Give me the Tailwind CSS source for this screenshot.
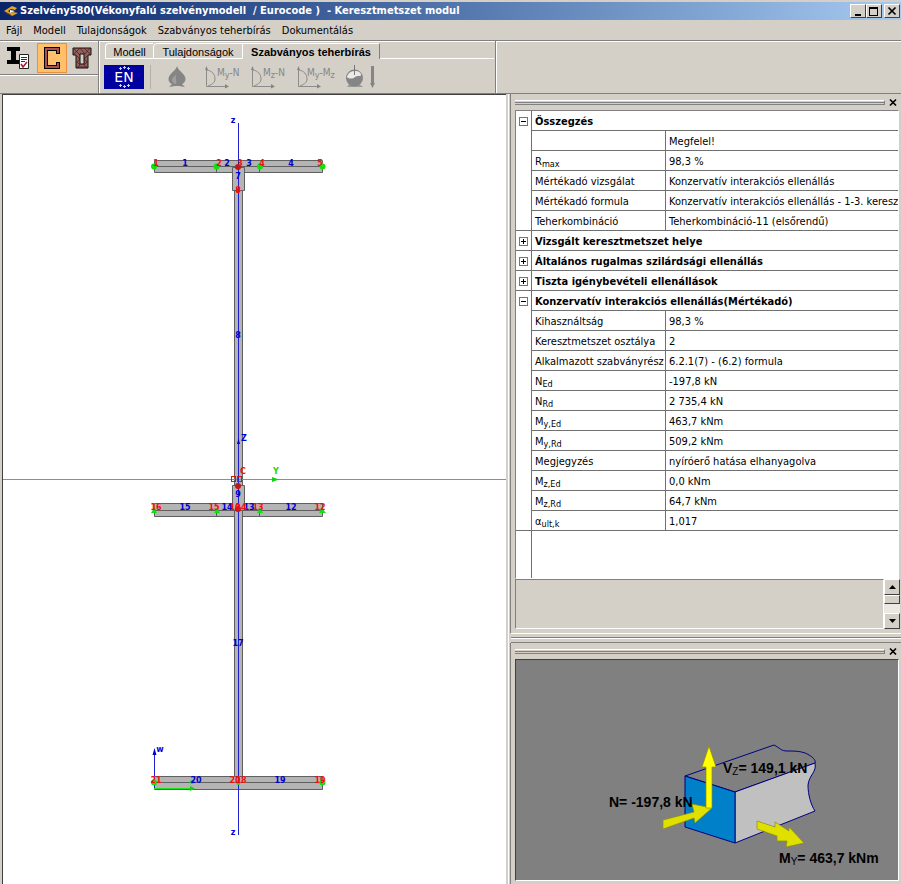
<!DOCTYPE html>
<html lang="hu">
<head>
    <meta charset="UTF-8">
    <meta name="viewport" content="width=device-width, initial-scale=1.0">
    <title>Keresztmetszet modul</title>
    <script src="https://cdn.jsdelivr.net/npm/@tailwindcss/browser@4"></script>
</head>
<body class="flex h-screen flex-col overflow-hidden bg-[#d4d0c8] font-['DejaVu_Sans_Condensed','DejaVu_Sans',sans-serif] text-[11px] leading-4 text-black">
    <!-- Címsor -->
    <header class="mt-0.5 flex h-[18px] shrink-0 items-center gap-0.5 bg-linear-to-r from-[#0a246a] to-[#a6caf0] pr-px pl-1">
        <svg class="h-3 w-3.5 shrink-0" viewBox="0 0 14 12">
            <path d="M0 6 L8 1 L13 3 L11 5 L7 4 L4 6 L7 8 L9 7 L14 8 L8 11Z" fill="#e8a420" />
            <path d="M6 5 L11 6 L6 8Z" fill="#fff" />
            <path d="M0 6 L3 9 L8 11 L6 9Z" fill="#6b3a10" />
        </svg>
        <h1 class="flex-1 truncate font-bold whitespace-pre text-white">Szelvény580(Vékonyfalú szelvénymodell  / Eurocode )  - Keresztmetszet modul</h1>
        <div class="flex gap-0.5">
            <div class="flex">
                <button aria-label="Kis méret" class="flex h-3.5 w-4 items-center justify-center border border-white border-r-[#404040] border-b-[#404040] bg-[#d4d0c8]"><svg class="h-2.5 w-2.5" viewBox="0 0 10 10"><path d="M2 8h6v2H2z" /></svg></button>
                <button aria-label="Teljes méret" class="flex h-3.5 w-4 items-center justify-center border border-white border-r-[#404040] border-b-[#404040] bg-[#d4d0c8]"><svg class="h-2.5 w-2.5" viewBox="0 0 10 10"><path d="M0 1h9v9H0zM1 3v6h7V3z" fill-rule="evenodd" /></svg></button>
            </div>
            <button aria-label="Bezárás" class="flex h-3.5 w-4 items-center justify-center border border-white border-r-[#404040] border-b-[#404040] bg-[#d4d0c8]"><svg class="h-2.5 w-2.5" viewBox="0 0 10 10"><path d="M1.500 1.500l7 7M8.500 1.500l-7 7" stroke="#000" stroke-width="1.700" /></svg></button>
        </div>
    </header>

    <!-- Menü -->
    <nav class="flex h-5 shrink-0 items-center gap-[11px] px-1.5 pt-px">
        <button>Fájl</button>
        <button>Modell</button>
        <button>Tulajdonságok</button>
        <button>Szabványos teherbírás</button>
        <button>Dokumentálás</button>
    </nav>

    <!-- Eszköztár -->
    <div class="flex h-[54px] shrink-0 border-y border-[#808080] shadow-[inset_0_1px_0_#fff]">
        <div class="w-[99px] border-r border-[#808080]">
            <div class="flex h-[34px] items-center gap-1 border-b border-[#808080] px-1 pt-px shadow-[0_1px_0_#fff]">
                <button aria-label="Szelvény" class="flex h-[30px] w-[29px] items-center justify-center">
                    <svg class="h-6 w-6" viewBox="0 0 24 24">
                        <path d="M0 1h13v4H9v9h4v4H0v-4h4V5H0z" />
                        <path d="M12.500 8.500h9v14h-9z" fill="#fff" stroke="#222" />
                        <path d="M14 11.500h6M14 13.500h6M14 15.500h4" stroke="#333" />
                        <path d="M14 18l2 3 4-5" fill="none" stroke="#b01030" stroke-width="1.500" />
                    </svg>
                </button>
                <button aria-label="Vékonyfalú modell" class="flex h-[30px] w-[30px] items-center justify-center border border-[#e89040] bg-[#ffc06c]">
                    <svg class="h-6 w-5" viewBox="0 0 20 24">
                        <path d="M16 8V3H4v18h12v-5" fill="none" stroke="#000" stroke-width="4" />
                        <path d="M16 7V3H4v18h12v-4" fill="none" stroke="#a85050" stroke-width="2" />
                        <path d="M5.500 5v14" stroke="#300" />
                    </svg>
                </button>
                <button aria-label="Felületmodell" class="flex h-[30px] w-[22px] items-center justify-center">
                    <svg class="h-6 w-5" viewBox="0 0 20 24">
                        <path d="M1 2h18v7h-3v13H4V9H1z" fill="#935f5b" stroke="#111" />
                        <path d="M2 8l6-6 5 6 5-6M5 10l3 3-3 3 3 3-3 3M15 10l-3 3 3 3-3 3 3 3M5 21h10M2 3l6 6M18 8l-6-6" fill="none" stroke="#501818" stroke-width="0.700" />
                        <path d="M8 8h4v10H8z" fill="#d4d0c8" stroke="#111" />
                    </svg>
                </button>
            </div>
        </div>
        <div class="w-[397px] border-r border-[#808080] pt-0.5 pl-0.5 shadow-[1px_0_0_#fff,inset_1px_0_0_#fff]">
            <div role="tablist" class="flex h-4 w-[393px] font-['Liberation_Sans',sans-serif]">
                <button role="tab" class="ml-1 w-12 rounded-tl border border-r-0 border-white">Modell</button>
                <button role="tab" class="w-[90px] rounded-tl border border-white">Tulajdonságok</button>
                <button role="tab" aria-selected="true" class="w-[137px] border-t border-r border-white border-r-[#808080] font-bold">Szabványos teherbírás</button>
                <div class="flex-1 border-b border-white"></div>
            </div>
            <div class="flex h-9 items-center pl-[3px]">
                <button aria-label="EN szabvány" class="h-6 w-10 bg-[#0000a0]">
                    <svg class="h-6 w-10" viewBox="0 0 40 24">
                        <path d="M15 3.500h3M19 2.500h3M23 3.500h3M16.500 2v3M20.500 1v3M24.500 2v3M15 20.500h3M19 21.500h3M23 20.500h3M16.500 19v3M20.500 20v3M24.500 19v3" stroke="#c8d0ff" />
                        <text x="20" y="17" text-anchor="middle" class="fill-white font-['DejaVu_Sans',sans-serif] text-[14px]">EN</text>
                    </svg>
                </button>
                <div class="ml-1.5 flex items-center gap-2 border-l border-[#b4b0a8] pl-4">
                    <button aria-label="Tűz" class="mr-2.5 h-6 w-5">
                        <svg class="h-6 w-5" viewBox="0 0 20 24">
                            <path d="M10 1c1 4 4 5 7 9 3 4 1 8-2 9l3 3-6-1H8l-6 1 3-3c-3-1-5-5-2-9 3-4 6-5 7-9z" fill="#858585" />
                            <path d="M9 8c0 3-4 4-4 7 0 2 2 4 4 4 1-3-1-7 0-11z" fill="#a29f9a" />
                        </svg>
                    </button>
                    <button aria-label="My-N" class="h-6 w-[38px]">
                        <svg class="h-6 w-[38px]" viewBox="0 0 38 24">
                            <path d="M1.500 2v19.500H23M2 5c5 1 8 4 8 9 0 3-2 5-7 7" fill="none" stroke="#8c8c88" />
                            <path d="M0 5l1.500-4L3 5zM20 19l4 2.500-4 2z" fill="#858585" />
                            <text x="12" y="11" class="fill-[#858585] font-['DejaVu_Sans_Condensed',sans-serif] text-[10px]">M<tspan font-size="9" dy="2">y</tspan><tspan dy="-2">-N</tspan></text>
                        </svg>
                    </button>
                    <button aria-label="Mz-N" class="h-6 w-[38px]">
                        <svg class="h-6 w-[38px]" viewBox="0 0 38 24">
                            <path d="M1.500 2v19.500H23M2 5c5 1 8 4 8 9 0 3-2 5-7 7" fill="none" stroke="#8c8c88" />
                            <path d="M0 5l1.500-4L3 5zM20 19l4 2.500-4 2z" fill="#858585" />
                            <text x="12" y="11" class="fill-[#858585] font-['DejaVu_Sans_Condensed',sans-serif] text-[10px]">M<tspan font-size="9" dy="2">z</tspan><tspan dy="-2">-N</tspan></text>
                        </svg>
                    </button>
                    <button aria-label="My-Mz" class="h-6 w-10">
                        <svg class="h-6 w-10" viewBox="0 0 40 24">
                            <path d="M1.500 2v19.500H23M2 5c5 1 8 4 8 9 0 3-2 5-7 7" fill="none" stroke="#8c8c88" />
                            <path d="M0 5l1.500-4L3 5zM20 19l4 2.500-4 2z" fill="#858585" />
                            <text x="10" y="11" class="fill-[#858585] font-['DejaVu_Sans_Condensed',sans-serif] text-[10px]">M<tspan font-size="9" dy="2">y</tspan><tspan dy="-2">-M</tspan><tspan font-size="9" dy="2">z</tspan></text>
                        </svg>
                    </button>
                    <button aria-label="Vizsgálat" class="h-6 w-8">
                        <svg class="h-6 w-8" viewBox="0 0 32 24">
                            <path d="M2 22l3-4h8l5 4z" fill="#999" />
                            <circle cx="9.500" cy="13" r="8.500" fill="#858585" />
                            <path d="M2 12c1-4 4-6 8-6s6 2 6 4-4 0-6 2-6 2-8 0z" fill="#eceae6" />
                            <path d="M9.500 0v10" stroke="#777" />
                            <path d="M26 1h3v17h1l-2.500 5-2.500-5h1z" fill="#858585" />
                        </svg>
                    </button>
                </div>
            </div>
        </div>
    </div>

    <main class="flex min-h-0 flex-1">
        <!-- Keresztmetszet rajza -->
        <section class="mr-0.5 ml-0.5 min-w-0 flex-1 border-t border-l border-[#404040] bg-white">
            <svg class="block h-full w-full font-['DejaVu_Sans',sans-serif] text-[8px] font-bold" viewBox="3 95 503 789">
                <!-- övlemezek és gerinc -->
                <g fill="#b4b4b4" stroke="#606060">
                    <path d="M154.500 160.500h168v12h-168zM154.500 503.500h168v13h-168zM154.500 776.500h168v13h-168z" />
                    <path d="M234.500 190.500h8v586h-8z" />
                    <path d="M232.500 167.500h12v23h-12zM232.500 485.500h12v25h-12z" />
                    <path d="M154.500 166.500h168M216.500 166v6M259.500 166v6M154.500 510.500h168M216.500 510v6M259.500 510v6M154.500 782.500h168" />
                </g>
                <!-- tengelyek -->
                <path d="M-2000 479h4500v1h-4500z" fill="#30d030" />
                <path d="M238.500 123v712M154.500 789v-38" stroke="#2020d0" />
                <path d="M237 444l1.500-6 1.500 6zM152.500 755l2-7 2 7z" fill="#0000d0" />
                <path d="M154 788.500h38" stroke="#20e020" />
                <path d="M272 477l7 2.500-7 2.500zM190 786l5 2.500-5 2.500z" fill="#10d010" />
                <g fill="#10e010">
                    <circle cx="154" cy="166.500" r="3" /><circle cx="216.500" cy="166.500" r="3" /><circle cx="260" cy="166.500" r="3" /><circle cx="322.500" cy="166.500" r="3" />
                    <path d="M151 513l3-5 3 5zM214 513l3-5 3 5zM257 513l3-5 3 5zM319 513l3-5 4 5z" />
                    <circle cx="154" cy="782.500" r="3" /><circle cx="192" cy="782" r="2" /><circle cx="238.500" cy="783" r="2" /><circle cx="322.500" cy="782.500" r="3" />
                </g>
                <g fill="#c01818">
                    <circle cx="238" cy="167" r="3" /><circle cx="238" cy="190" r="2" /><circle cx="238" cy="486" r="3" /><circle cx="238" cy="509" r="3" />
                </g>
                <path d="M231 476h5v6h-5zM232 477v4h3v-4zM237 476h5v6h-5zM238 477v4h3v-4z" fill="#e01010" fill-rule="evenodd" />
                <g fill="#0000d0" text-anchor="middle">
                    <text x="233" y="123">z</text><text x="233" y="835">z</text><text x="244" y="441">Z</text><text x="160" y="752">w</text>
                    <text x="185" y="166">1</text><text x="227" y="166">2</text><text x="249" y="166">3</text><text x="291" y="166">4</text>
                    <text x="238" y="179">7</text><text x="238" y="338">8</text><text x="238" y="497">9</text>
                    <text x="185" y="510">15</text><text x="227" y="510">14</text><text x="249" y="510">13</text><text x="291" y="510">12</text>
                    <text x="238" y="646">17</text><text x="196" y="783">20</text><text x="280" y="783">19</text>
                </g>
                <g fill="#f01010" text-anchor="middle">
                    <text x="156" y="166">1</text><text x="219" y="166">2</text><text x="240" y="166">3</text><text x="262" y="166">4</text><text x="320" y="166">5</text>
                    <text x="243" y="474">C</text><text x="238" y="193">8</text>
                    <text x="156" y="510">16</text><text x="214" y="510">15</text><text x="235" y="510">10</text><text x="241" y="510">14</text><text x="258" y="510">13</text><text x="320" y="510">12</text>
                    <text x="156" y="783">21</text><text x="235" y="783">20</text><text x="241" y="783">18</text><text x="320" y="783">19</text>
                </g>
                <text x="276" y="474" text-anchor="middle" fill="#20d820">Y</text>
            </svg>
        </section>

        <div class="flex w-[393px] shrink-0 flex-col border-l border-white">
            <!-- Eredménytábla -->
            <section class="ml-px flex min-h-0 flex-1 flex-col border-l border-[#808080] pl-1">
                <div class="flex h-4 shrink-0 items-center gap-[3px] pr-[3px]">
                    <div class="h-[5px] flex-1 border-y border-r border-t-white border-r-[#808080] border-b-[#808080]"><div class="mt-px h-px bg-[#808080]"></div></div>
                    <button aria-label="Panel bezárása" class="h-2.5 w-2.5"><svg class="h-2.5 w-2.5" viewBox="0 0 10 10"><path d="M2 2.500l6 6M8 2.500l-6 6" stroke="#000" stroke-width="1.700" /></svg></button>
                </div>
                <div class="mr-0.5 flex min-h-0 flex-1 flex-col overflow-hidden border border-[#808080] border-r-white border-b-white bg-white">
                    <table class="w-full table-fixed border-separate border-spacing-0 text-left whitespace-nowrap [&_td]:overflow-hidden [&_td]:border-b [&_td]:border-[#707070] [&_td]:px-[3px] [&_td]:pt-0.5 [&_td]:pb-0 [&_th]:border-b [&_th]:border-[#707070] [&_th]:px-[3px] [&_th]:pt-0.5 [&_th]:pb-0 [&_tr]:h-5 [&_sub]:bottom-[-2px] [&_sub]:text-[9px]">
                        <colgroup><col class="w-4"><col class="w-[134px]"><col></colgroup>
                        <tbody>
                            <tr><td rowspan="6" class="border-r align-top"><button aria-label="Összecsukás" class="mt-1 flex h-[9px] w-[9px] items-center justify-center border border-[#707090]"><span class="h-px w-[5px] bg-black"></span></button></td><th colspan="2">Összegzés</th></tr>
                            <tr><td class="border-r"></td><td>Megfelel!</td></tr>
                            <tr><td class="border-r">R<sub>max</sub></td><td>98,3 %</td></tr>
                            <tr><td class="border-r">Mértékadó vizsgálat</td><td>Konzervatív interakciós ellenállás</td></tr>
                            <tr><td class="border-r">Mértékadó formula</td><td>Konzervatív interakciós ellenállás - 1-3. keresztmetszet</td></tr>
                            <tr><td class="border-r">Teherkombináció</td><td>Teherkombináció-11 (elsőrendű)</td></tr>
                        </tbody>
                        <tbody>
                            <tr><td class="border-r"><button aria-label="Kibontás" class="flex h-[9px] w-[9px] items-center justify-center border border-[#707090]"><svg class="h-[5px] w-[5px]" viewBox="0 0 5 5"><path d="M0 2h5v1H0zM2 0h1v5H2z" /></svg></button></td><th colspan="2">Vizsgált keresztmetszet helye</th></tr>
                            <tr><td class="border-r"><button aria-label="Kibontás" class="flex h-[9px] w-[9px] items-center justify-center border border-[#707090]"><svg class="h-[5px] w-[5px]" viewBox="0 0 5 5"><path d="M0 2h5v1H0zM2 0h1v5H2z" /></svg></button></td><th colspan="2">Általános rugalmas szilárdsági ellenállás</th></tr>
                            <tr><td class="border-r"><button aria-label="Kibontás" class="flex h-[9px] w-[9px] items-center justify-center border border-[#707090]"><svg class="h-[5px] w-[5px]" viewBox="0 0 5 5"><path d="M0 2h5v1H0zM2 0h1v5H2z" /></svg></button></td><th colspan="2">Tiszta igénybevételi ellenállások</th></tr>
                        </tbody>
                        <tbody>
                            <tr><td rowspan="12" class="border-r align-top"><button aria-label="Összecsukás" class="mt-1 flex h-[9px] w-[9px] items-center justify-center border border-[#707090]"><span class="h-px w-[5px] bg-black"></span></button></td><th colspan="2">Konzervatív interakciós ellenállás(Mértékadó)</th></tr>
                            <tr><td class="border-r">Kihasználtság</td><td>98,3 %</td></tr>
                            <tr><td class="border-r">Keresztmetszet osztálya</td><td>2</td></tr>
                            <tr><td class="border-r">Alkalmazott szabványrész</td><td>6.2.1(7) - (6.2) formula</td></tr>
                            <tr><td class="border-r">N<sub>Ed</sub></td><td>-197,8 kN</td></tr>
                            <tr><td class="border-r">N<sub>Rd</sub></td><td>2 735,4 kN</td></tr>
                            <tr><td class="border-r">M<sub>y,Ed</sub></td><td>463,7 kNm</td></tr>
                            <tr><td class="border-r">M<sub>y,Rd</sub></td><td>509,2 kNm</td></tr>
                            <tr><td class="border-r">Megjegyzés</td><td>nyíróerő hatása elhanyagolva</td></tr>
                            <tr><td class="border-r">M<sub>z,Ed</sub></td><td>0,0 kNm</td></tr>
                            <tr><td class="border-r">M<sub>z,Rd</sub></td><td>64,7 kNm</td></tr>
                            <tr><td class="border-r">α<sub>ult,k</sub></td><td>1,017</td></tr>
                        </tbody>
                    </table>
                    <div class="w-4 flex-1 border-r border-[#707070]"></div>
                </div>
                <div class="mr-px flex h-[50px] shrink-0">
                    <div class="flex-1 border border-[#808080] border-r-white border-b-white"></div>
                    <div class="flex w-4 flex-col bg-[#eae8e4]">
                        <button aria-label="Fel" class="flex h-4 items-center justify-center border border-white border-r-[#404040] border-b-[#404040] bg-[#d4d0c8]"><svg class="h-1 w-[7px]" viewBox="0 0 7 4"><path d="M0 4h7L3.500 0z" /></svg></button>
                        <div class="h-[9px] border border-white border-r-[#404040] border-b-[#404040] bg-[#d4d0c8]"></div>
                        <button aria-label="Le" class="mt-auto flex h-4 items-center justify-center border border-white border-r-[#404040] border-b-[#404040] bg-[#d4d0c8]"><svg class="h-1 w-[7px]" viewBox="0 0 7 4"><path d="M0 0h7L3.500 4z" /></svg></button>
                    </div>
                </div>
                <div class="h-1 shrink-0"></div>
            </section>

            <!-- Elválasztó -->
            <div class="ml-0.5 h-2.5 shrink-0 border-y border-t-white border-b-[#808080]">
                <div class="mt-[3px] h-0.5 border-t border-b border-t-[#808080] border-b-white"></div>
            </div>

            <!-- Igénybevételek ábrája -->
            <section class="ml-px shrink-0 border-l border-[#808080] pb-[3px] pl-1">
                <div class="flex h-4 items-center gap-[3px] pr-[3px]">
                    <div class="h-[5px] flex-1 border-y border-r border-t-white border-r-[#808080] border-b-[#808080]"><div class="mt-px h-px bg-[#808080]"></div></div>
                    <button aria-label="Panel bezárása" class="h-2.5 w-2.5"><svg class="h-2.5 w-2.5" viewBox="0 0 10 10"><path d="M2 2.500l6 6M8 2.500l-6 6" stroke="#000" stroke-width="1.700" /></svg></button>
                </div>
                <div class="mr-0.5 border border-[#404040] border-r-white border-b-white bg-[#808080]">
                    <svg class="block h-[220px] w-full font-['Liberation_Sans',sans-serif] text-[14px] font-bold" viewBox="516 660 382 220">
                        <path d="M685 776 L774 745 C780 748 781 751 787 751 C795 751 803 751 809 755 C814 758 816 761 815 763 L735 792Z" fill="#808080" stroke="#000080" />
                        <path d="M735 792 L815 763 C817 772 809 775 808 785 C808 795 811 805 815 811 L735 843Z" fill="#c0c0c0" stroke="#000080" />
                        <path d="M685 776 L735 792 V843 L685 827Z" fill="#0080c8" stroke="#000080" />
                        <g stroke="#8c8c10" stroke-width="0.700">
                            <path d="M663 820 L694 812 L692 804 L712 808 L695 823 L694 818 L663 829Z" fill="#e0e000" />
                            <path d="M709 746 L716 767 H712 V808 H706 V767 H702Z" fill="#ffff00" />
                            <path d="M757 821 L775 827 V822 L789 831 L789 827 L804 843 L786 847 L787 841 L777 841 L777 836 L757 829Z" fill="#e0e000" />
                        </g>
                        <text x="609" y="807">N= -197,8 kN</text>
                        <text x="723" y="773">V<tspan font-size="10" font-weight="400" dy="2">Z</tspan><tspan dy="-2">= 149,1 kN</tspan></text>
                        <text x="779" y="863">M<tspan font-size="10" font-weight="400" dy="2">Y</tspan><tspan dy="-2">= 463,7 kNm</tspan></text>
                    </svg>
                </div>
            </section>
        </div>
    </main>
</body>
</html>
